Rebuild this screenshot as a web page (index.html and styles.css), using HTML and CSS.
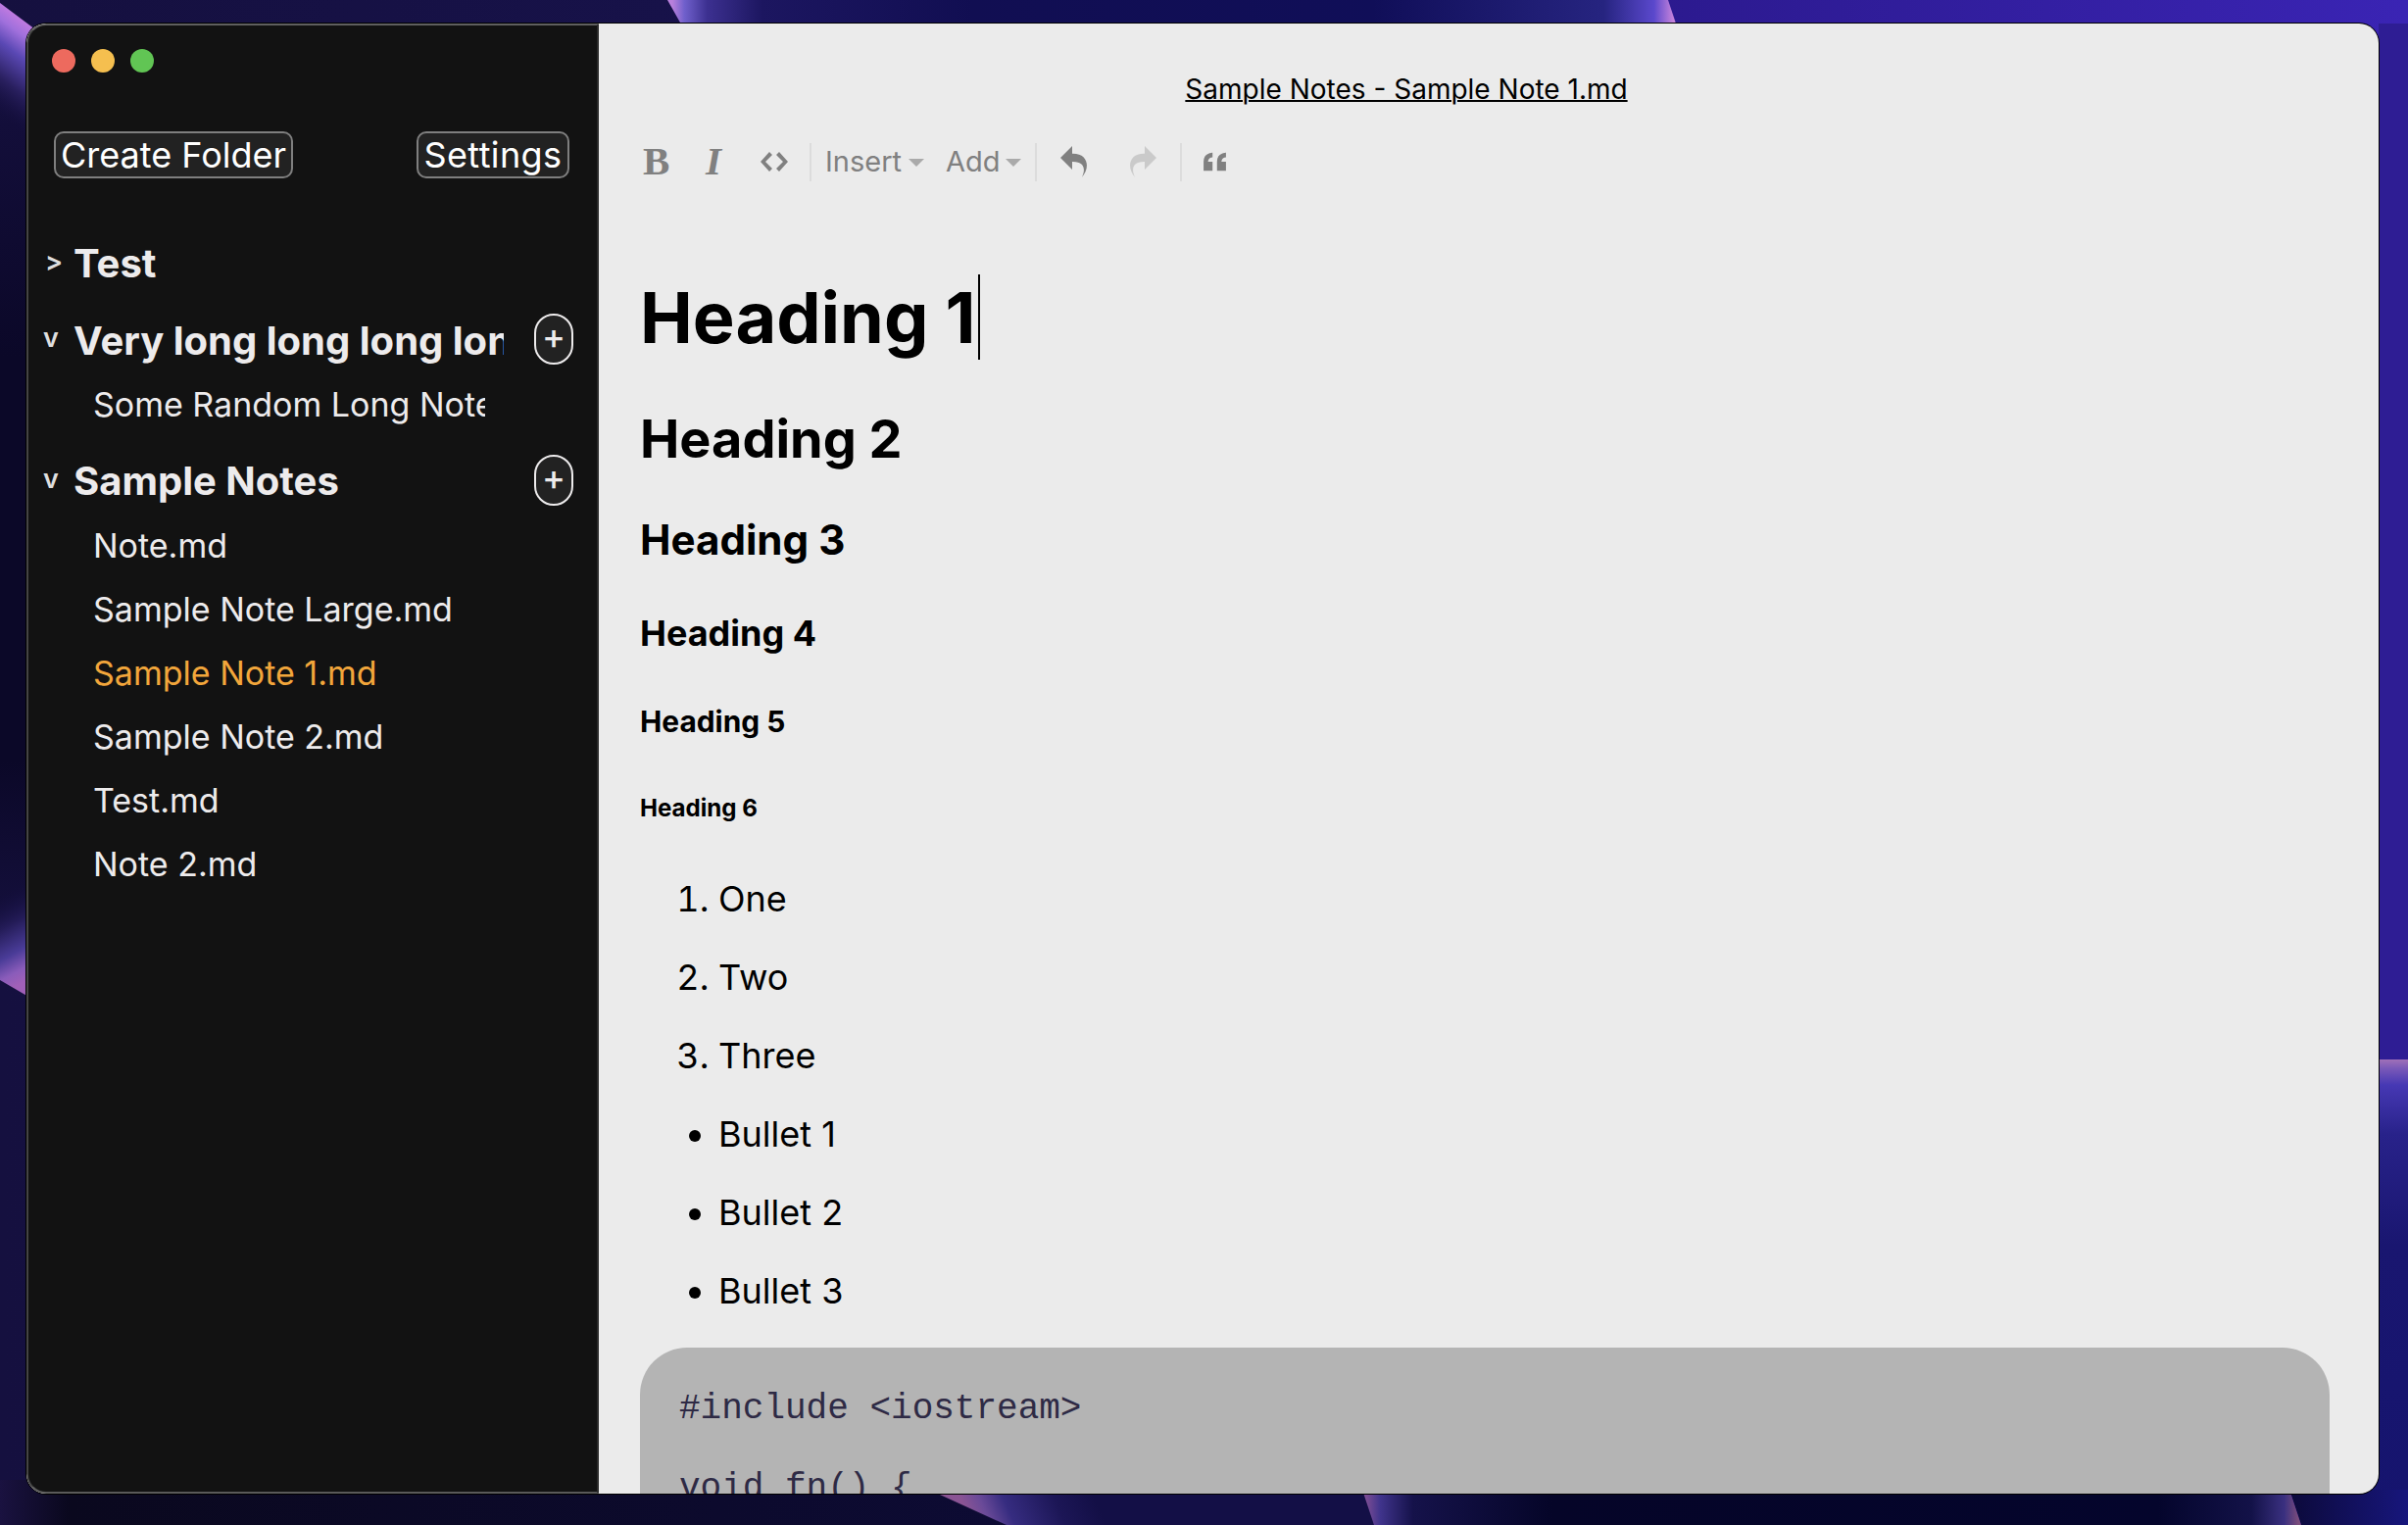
FILE: index.html
```
<!DOCTYPE html>
<html lang="en">
<head>
<meta charset="utf-8">
<title>Sample Notes - Sample Note 1.md</title>
<link rel="stylesheet" href="styles.css">
</head>
<body>
<div class="desktop">
  <svg class="wallpaper" viewBox="0 0 2457 1556" preserveAspectRatio="none" aria-hidden="true">
    <defs>
      <linearGradient id="base" x1="0" x2="1" y1="0" y2="0">
        <stop offset="0" stop-color="#15103f"/><stop offset=".3" stop-color="#17124a"/><stop offset=".7" stop-color="#2c1a90"/><stop offset="1" stop-color="#3a24b4"/>
      </linearGradient>
      <linearGradient id="leftTop" gradientUnits="userSpaceOnUse" x1="14" y1="13" x2="-42" y2="88">
        <stop offset="0" stop-color="#c07ae0"/><stop offset=".14" stop-color="#a070dc"/><stop offset=".34" stop-color="#5a48b4"/><stop offset=".65" stop-color="#2a2060"/><stop offset="1" stop-color="#130e3c" stop-opacity="0"/>
      </linearGradient>
      <linearGradient id="leftBottom" gradientUnits="userSpaceOnUse" x1="13" y1="1008" x2="-30" y2="930">
        <stop offset="0" stop-color="#a060b8"/><stop offset=".14" stop-color="#8a5cba"/><stop offset=".34" stop-color="#4a3c98"/><stop offset=".65" stop-color="#241c58"/><stop offset="1" stop-color="#120d3c" stop-opacity="0"/>
      </linearGradient>
      <linearGradient id="top" gradientUnits="userSpaceOnUse" x1="686" x2="1708" y1="0" y2="0">
        <stop offset="0" stop-color="#b880dc"/><stop offset=".012" stop-color="#7060cc"/><stop offset=".035" stop-color="#3c3090"/><stop offset=".09" stop-color="#1c1660"/><stop offset=".3" stop-color="#110e52"/><stop offset=".7" stop-color="#100e58"/><stop offset=".93" stop-color="#262480"/><stop offset=".98" stop-color="#5a48cc"/><stop offset="1" stop-color="#c884dc"/>
      </linearGradient>
      <linearGradient id="rightSide" x1="0" x2="0" y1="0" y2="1">
        <stop offset="0" stop-color="#a070b8"/><stop offset=".02" stop-color="#7858b8"/><stop offset=".055" stop-color="#4638b4"/><stop offset=".16" stop-color="#28228a"/><stop offset=".4" stop-color="#191670"/><stop offset="1" stop-color="#15146e"/>
      </linearGradient>
      <linearGradient id="bottomLeft" x1="0" x2="1" y1="0" y2="0">
        <stop offset="0" stop-color="#1a1240"/><stop offset=".05" stop-color="#0a081e"/><stop offset="1" stop-color="#0e0c3c"/>
      </linearGradient>
      <linearGradient id="bottomA" gradientUnits="userSpaceOnUse" x1="985" y1="1540" x2="1100" y2="1490">
        <stop offset="0" stop-color="#8a5494"/><stop offset=".14" stop-color="#6a4a98"/><stop offset=".32" stop-color="#362c80"/><stop offset=".7" stop-color="#1c1656"/><stop offset="1" stop-color="#130f46"/>
      </linearGradient>
      <linearGradient id="bottomB" gradientUnits="userSpaceOnUse" x1="1394" x2="2345" y1="0" y2="0">
        <stop offset="0" stop-color="#7a4c94"/><stop offset=".015" stop-color="#40348c"/><stop offset=".05" stop-color="#15124a"/><stop offset=".2" stop-color="#050528"/><stop offset=".85" stop-color="#04052c"/><stop offset=".95" stop-color="#131248"/><stop offset=".985" stop-color="#3a3080"/><stop offset="1" stop-color="#7a4c7c"/>
      </linearGradient>
      <linearGradient id="bottomRight" gradientUnits="userSpaceOnUse" x1="2340" x2="2457" y1="0" y2="0">
        <stop offset="0" stop-color="#0c0a3c"/><stop offset="1" stop-color="#17167c"/>
      </linearGradient>
      <linearGradient id="leftSide" x1="0" x2="0" y1="0" y2="1">
        <stop offset="0" stop-color="#1c1550"/><stop offset=".12" stop-color="#130e3a"/><stop offset=".35" stop-color="#0b0828"/><stop offset=".75" stop-color="#0b0828"/><stop offset="1" stop-color="#1a1448"/>
      </linearGradient>
    </defs>
    <rect width="2457" height="1556" fill="url(#base)"/>
    <rect x="2427" y="24" width="30" height="1058" fill="#2e1d94"/>
    <path d="M0 3 60 48V1035L0 1000Z" fill="url(#leftSide)"/>
    <path d="M0 3 60 48V160H0Z" fill="url(#leftTop)"/>
    <path d="M0 1000 60 1035V880H0Z" fill="url(#leftBottom)"/>
    <path d="M681 0 698 30H1712L1702 0Z" fill="url(#top)"/>
    <rect x="2400" y="1081" width="57" height="475" fill="url(#rightSide)"/>
    <rect y="1510" width="1400" height="46" fill="url(#bottomLeft)"/>
    <path d="M948 1520 1027 1556H1410V1520Z" fill="url(#bottomA)"/>
    <path d="M2336 1520 2348 1556H2457V1520Z" fill="url(#bottomRight)"/>
    <path d="M1390 1520 1402 1556H2348L2336 1520Z" fill="url(#bottomB)"/>
  </svg>

  <div class="window">
    <aside class="sidebar">
      <div class="lights"><i class="light close"></i><i class="light minimize"></i><i class="light zoom"></i></div>
      <div class="actions">
        <button class="action">Create Folder</button>
        <button class="action settings">Settings</button>
      </div>
      <nav class="tree">
        <section class="folder">
          <div class="folder-row"><span class="arrow closed">&gt;</span><span class="folder-name">Test</span></div>
        </section>
        <section class="folder">
          <div class="folder-row"><span class="arrow">v</span><span class="folder-name">Very long long long long</span><button class="add">+</button></div>
          <div class="note">Some Random Long Note.md</div>
        </section>
        <section class="folder">
          <div class="folder-row"><span class="arrow">v</span><span class="folder-name">Sample Notes</span><button class="add">+</button></div>
          <div class="note">Note.md</div>
          <div class="note">Sample Note Large.md</div>
          <div class="note active">Sample Note 1.md</div>
          <div class="note">Sample Note 2.md</div>
          <div class="note">Test.md</div>
          <div class="note">Note 2.md</div>
        </section>
      </nav>
    </aside>

    <main class="main">
      <div class="title">Sample Notes - Sample Note 1.md</div>
      <div class="toolbar">
        <span class="tool bold">B</span>
        <span class="tool italic">I</span>
        <svg class="tool code" viewBox="0 0 896 1024"><path d="M608 192l-96 96 224 224-224 224 96 96 288-320-288-320zM288 192l-288 320 288 320 96-96-224-224 224-224-96-96z"/></svg>
        <span class="sep"></span>
        <span class="drop insert">Insert</span>
        <span class="drop more">Add</span>
        <span class="sep"></span>
        <svg class="tool undo" viewBox="0 0 1024 1024"><path d="M761 1024c113-206 132-520-313-509v253l-384-384 384-384v248c534-13 594 472 313 775z"/></svg>
        <svg class="tool redo" viewBox="0 0 1024 1024"><path d="M576 248v-248l384 384-384 384v-253c-446-10-427 303-313 509-280-303-221-789 313-775z"/></svg>
        <span class="sep"></span>
        <svg class="tool quote" viewBox="0 0 640 896"><path d="M0 448v256h256v-256h-128c0 0 0-128 128-128v-128c0 0-256 0-256 256zM640 320v-128c0 0-256 0-256 256v256h256v-256h-128c0 0 0-128 128-128z"/></svg>
      </div>
      <article class="doc">
        <h1>Heading 1<span class="cursor"></span></h1>
        <h2>Heading 2</h2>
        <h3>Heading 3</h3>
        <h4>Heading 4</h4>
        <h5>Heading 5</h5>
        <h6>Heading 6</h6>
        <ol><li><p>One</p></li><li><p>Two</p></li><li><p>Three</p></li></ol>
        <ul><li><p>Bullet 1</p></li><li><p>Bullet 2</p></li><li><p>Bullet 3</p></li></ul>
        <pre>#include &lt;iostream&gt;

void fn() {</pre>
      </article>
    </main>
  </div>
</div>
</body>
</html>
```
FILE: styles.css
```
* { box-sizing: border-box; }
body {
  margin: 0;
  font-family: Inter, "Liberation Sans", sans-serif;
  font-optical-sizing: none;
  overflow: hidden;
}
.desktop { display: grid; width: 2457px; height: 1556px; }
.wallpaper { grid-area: 1 / 1; width: 100%; height: 100%; }
.window {
  grid-area: 1 / 1;
  z-index: 1;
  display: flex;
  width: 2400px;
  height: 1500px;
  margin: 24px 0 0 27px;
  border-radius: 20px;
  overflow: hidden;
  background: #ebebeb;
  box-shadow: 0 0 0 1px #000;
}

/* Sidebar */
.sidebar {
  flex: none;
  width: 584px;
  padding: 24px 28px 0 24px;
  background: #121212;
  border: 2px solid #444;
  border-top-color: #5f5f5f;
  border-bottom-color: #5a5a5a;
  border-right-color: #2b2b2b;
  border-radius: 20px 0 0 20px;
  color: #edebec;
}
.lights { display: flex; gap: 16px; }
.light { width: 24px; height: 24px; border-radius: 50%; }
.close { background: #ed6a5e; }
.minimize { background: #f5bf4f; }
.zoom { background: #61c554; }
.actions { display: flex; justify-content: space-between; margin: 60px 0 0 2px; }
.action {
  height: 48px;
  padding: 0 5px;
  border: 2px solid #7f7f7f;
  border-radius: 10px;
  background: #222;
  color: #fff;
  font: 400 36px/44px Inter, "Liberation Sans", sans-serif;
  font-optical-sizing: none;
}
.settings { padding: 0 5.5px; letter-spacing: .4px; }
.tree { display: flex; flex-direction: column; gap: 12.5px; margin: 53.5px -4px 0 -9px; }
.folder-row { display: flex; align-items: center; height: 66px; }
.arrow { width: 31px; font-size: 27px; font-weight: 600; line-height: 40px; color: #dedede; margin-bottom: 4px; }
.arrow.closed { padding-left: 2px; }
.folder-name {
  width: 439px;
  overflow: hidden;
  white-space: nowrap;
  font-size: 40px;
  font-weight: 700;
  line-height: 52px;
  padding-top: 1px;
}
.add {
  flex: none;
  width: 40px;
  height: 52px;
  margin: 0 0 2px auto;
  padding: 0 0 6px;
  border: 2px solid #edebec;
  border-radius: 20px;
  background: #222;
  color: #edebec;
  font: 500 36px/42px Inter, "Liberation Sans", sans-serif;
}
.note {
  height: 65px;
  width: 400px;
  margin-left: 51px;
  overflow: hidden;
  white-space: nowrap;
  font-size: 34px;
  line-height: 65px;
}
.note.active { color: #f2a63b; }

/* Editor */
.main { flex: 1; min-width: 0; padding: 49px 50px 0 42px; }
.title {
  width: 1564px;
  font-size: 28px;
  line-height: 36px;
  text-align: center;
  text-decoration: underline;
  text-decoration-thickness: 2px;
  color: #000;
}
.toolbar { display: flex; align-items: center; height: 40px; margin-top: 36px; color: #808080; fill: #808080; }
.tool { flex: none; height: 32px; }
.bold, .italic { font: 700 41px/30px "Liberation Serif", serif; }
.bold { width: 28px; margin-left: 3px; }
.italic { width: 18px; margin-left: 36px; font-style: italic; }
.code { width: 28px; margin-left: 38px; }
.sep { width: 2px; height: 39px; background: #dcdcdc; margin-left: 22px; }
.drop { display: flex; align-items: center; font-size: 29px; line-height: 32px; }
.drop::after {
  content: "";
  margin-top: 2px;
  border: 8px solid transparent;
  border-top-color: #aaa;
  border-bottom: 0;
}
.insert { width: 101px; margin-left: 14px; justify-content: space-between; }
.more { width: 77px; margin-left: 22px; justify-content: space-between; }
.more + .sep { margin-left: 14px; }
.undo { width: 32px; margin-left: 22px; }
.redo { width: 32px; margin-left: 38px; opacity: .3; }
.redo + .sep { margin-left: 22px; }
.quote { width: 23px; margin-left: 22px; }

.doc { margin-top: 95px; font-size: 36px; color: #000; }
.doc h1, .doc h2, .doc h3, .doc h4, .doc h5, .doc h6 { font-weight: 700; }
.doc h1 { display: flex; font-size: 72px; margin: 0 0 48px; line-height: 87px; }
.cursor { width: 2px; height: 87px; background: #000; margin-left: 2px; }
.doc h2 { font-size: 54px; margin: 0 0 44.8px; }
.doc h3 { font-size: 42.12px; margin: 0 0 47.9px; }
.doc h4 { font-size: 36px; margin: 0 0 49.9px; }
.doc h5 { font-size: 29.88px; margin: 0 0 56.2px; }
.doc h6 { font-size: 24.12px; margin: 0 0 56.2px; }
.doc ol, .doc ul { margin: 0; padding-left: 80px; }
.doc p { margin: 0 0 36px; line-height: 44px; }
.doc pre {
  margin: 0;
  height: 300px;
  padding: 43px 40px;
  border-radius: 48px;
  background: #b4b4b4;
  color: #2e2a45;
  font: 36px/40.5px "Courier New", "Liberation Mono", monospace;
}
```
